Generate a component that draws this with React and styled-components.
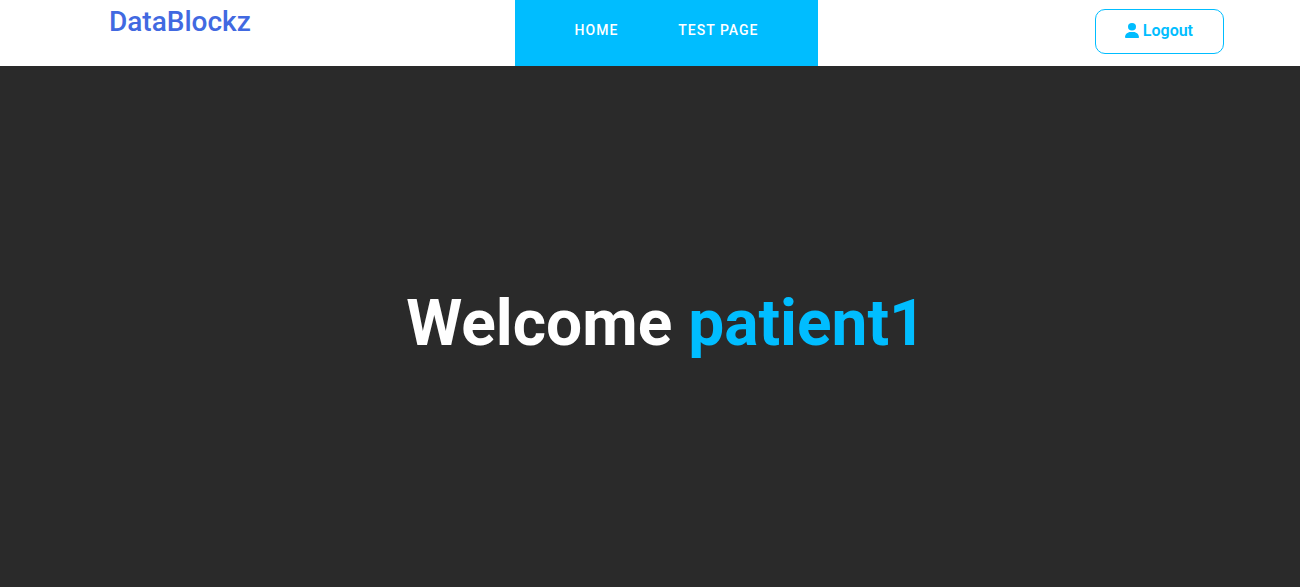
import React from "react";
import styled, { createGlobalStyle } from "styled-components";
import { FaUser } from "react-icons/fa6";

const GlobalStyle = createGlobalStyle`
  *, *::before, *::after { box-sizing: border-box; }
  body { margin: 0; font-family: Roboto, sans-serif; background: #2a2a2a; }
`;

const Page = styled.div`
  min-height: 100vh;
  display: flex;
  flex-direction: column;
`;

const Header = styled.header`
  display: grid;
  grid-template-columns: 1fr auto 1fr;
  min-height: 66px;
  padding: 0 76px 0 109px;
  background: #fff;
`;

const Brand = styled.a`
  justify-self: start;
  padding-top: 5px;
  color: #4169e1;
  font-size: 28px;
  font-weight: 500;
  line-height: 34px;
  text-decoration: none;
`;

const Nav = styled.nav`
  display: flex;
  gap: 60px;
  padding: 0 60px;
  background: #00bdff;
`;

const NavLink = styled.a`
  padding-top: 20px;
  color: #fff;
  font-size: 14px;
  font-weight: 500;
  line-height: 20px;
  letter-spacing: 1px;
  text-transform: uppercase;
  text-decoration: none;
`;

const LogoutButton = styled.button`
  justify-self: end;
  display: flex;
  align-items: center;
  gap: 4px;
  height: 45px;
  margin-top: 9px;
  padding: 0 30px 2px 29px;
  border: 1px solid #00bdff;
  border-radius: 10px;
  background: #fff;
  color: #00bdff;
  font-family: inherit;
  font-size: 16px;
  font-weight: 600;
  line-height: 20px;
`;

const UserIcon = styled(FaUser)`
  width: 14px;
  height: 15px;
`;

const Hero = styled.main`
  flex: 1;
  display: flex;
  align-items: center;
  justify-content: center;
  padding: 0 0 6px 32px;
  background: #2a2a2a;
`;

const Title = styled.h1`
  margin: 0;
  color: #fff;
  font-size: 64px;
  font-weight: 700;
  line-height: 78px;
`;

const UserName = styled.span`
  color: #00bdff;
`;

export default function App() {
  return (
    <Page>
      <GlobalStyle />
      <Header>
        <Brand href="#">DataBlockz</Brand>
        <Nav>
          <NavLink href="#">Home</NavLink>
          <NavLink href="#">Test Page</NavLink>
        </Nav>
        <LogoutButton type="button">
          <UserIcon preserveAspectRatio="none" aria-hidden="true" />
          Logout
        </LogoutButton>
      </Header>
      <Hero>
        <Title>
          Welcome <UserName>patient1</UserName>
        </Title>
      </Hero>
    </Page>
  );
}
